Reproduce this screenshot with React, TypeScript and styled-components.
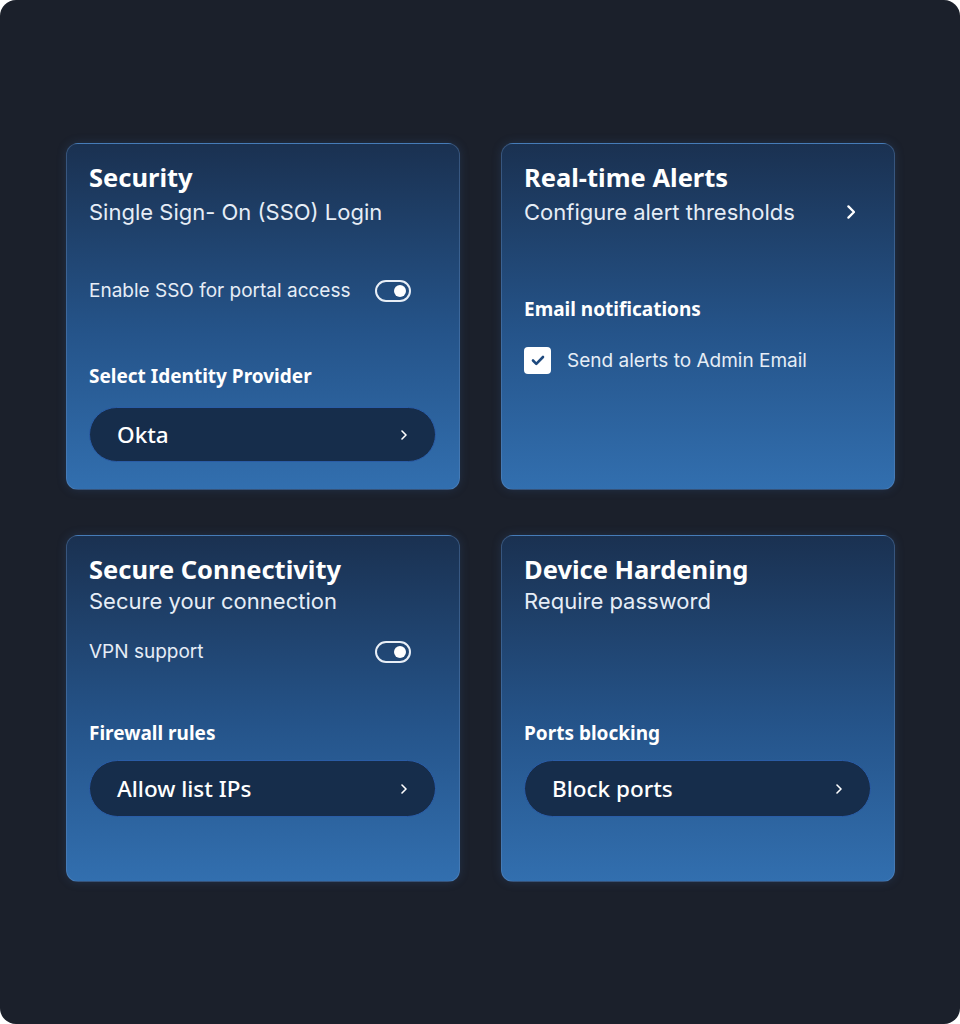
import React from "react";
import styled, { createGlobalStyle } from "styled-components";

const Global = createGlobalStyle`
  html, body { margin: 0; padding: 0; background: #ffffff; }
  body { font-family: "Inter", "Noto Sans", sans-serif; -webkit-font-smoothing: antialiased; }
  * { box-sizing: border-box; }
`;

const Page = styled.div`
  width: 960px;
  height: 1024px;
  background: #1b202b;
  border-radius: 16px;
  padding: 143px 66px 142px;
  display: grid;
  grid-template-columns: 1fr 1fr;
  grid-template-rows: 1fr 1fr;
  column-gap: 41px;
  row-gap: 45px;
`;

const Card = styled.section`
  border-radius: 12px;
  border: 1px solid rgba(110, 150, 200, 0.35);
  background: linear-gradient(180deg, #1a3151 0%, #25548a 55%, #326faf 100%);
  box-shadow: 0 0 10px rgba(60, 100, 160, 0.25);
  padding: 18px 23px 0 22px;
  display: flex;
  flex-direction: column;
  color: #ffffff;
`;

const Title = styled.h2`
  margin: 0;
  font-family: "Noto Sans", "Open Sans", sans-serif;
  font-weight: 700;
  font-size: 25.5px;
  line-height: 30px;
`;

const SubRow = styled.div<{ $gap: number }>`
  margin-top: ${(p) => p.$gap}px;
  display: flex;
  align-items: center;
  justify-content: space-between;
  padding-right: 16px;
`;

const Subtitle = styled.p`
  margin: 0;
  font-family: "Inter", sans-serif;
  font-weight: 400;
  font-size: 22px;
  line-height: 26px;
  color: #e6edf6;
`;

const ToggleRow = styled.div<{ $top: number }>`
  margin-top: ${(p) => p.$top}px;
  display: flex;
  align-items: center;
  justify-content: space-between;
  padding-right: 25px;
  height: 24px;
`;

const RowText = styled.span`
  font-family: "Inter", sans-serif;
  font-size: 19px;
  line-height: 24px;
  color: #e6edf6;
`;

const Toggle = styled.span`
  width: 36px;
  height: 22px;
  border: 2px solid #e8eef6;
  border-radius: 11px;
  display: flex;
  align-items: center;
  justify-content: flex-end;
  padding-right: 3px;
  &::after {
    content: "";
    width: 12px;
    height: 12px;
    border-radius: 50%;
    background: #ffffff;
  }
`;

const SectionLabel = styled.h3<{ $top: number }>`
  margin: ${(p) => p.$top}px 0 0;
  font-family: "Noto Sans", "Open Sans", sans-serif;
  font-weight: 700;
  font-size: 19px;
  line-height: 24px;
  color: #ffffff;
`;

const Pill = styled.button<{ $top: number; $h: number }>`
  margin-top: ${(p) => p.$top}px;
  width: 347px;
  height: ${(p) => p.$h}px;
  border-radius: 999px;
  background: #162d4b;
  border: 1px solid #2a5ca6;
  display: flex;
  align-items: center;
  justify-content: space-between;
  padding: 0 28px 0 27px;
  color: #ffffff;
  font-family: "Noto Sans", "Open Sans", sans-serif;
  font-size: 22.5px;
  font-weight: 500;
  cursor: pointer;
`;

const CheckRow = styled.div<{ $top: number }>`
  margin-top: ${(p) => p.$top}px;
  display: flex;
  align-items: center;
  gap: 16px;
`;

const CheckBox = styled.span`
  width: 27px;
  height: 27px;
  border-radius: 4px;
  background: #ffffff;
  display: flex;
  align-items: center;
  justify-content: center;
`;

const Chevron = ({ size = 10 }: { size?: number }) => (
  <svg width={size * 0.6} height={size} viewBox="0 0 6 10" fill="none">
    <path d="M1 1l4 4-4 4" stroke="#ffffff" strokeWidth="1.6" strokeLinecap="round" strokeLinejoin="round" />
  </svg>
);

export default function App() {
  return (
    <>
      <Global />
      <Page>
        <Card>
          <Title>Security</Title>
          <SubRow $gap={7}>
            <Subtitle>Single Sign- On (SSO) Login</Subtitle>
          </SubRow>
          <ToggleRow $top={54}>
            <RowText>Enable SSO for portal access</RowText>
            <Toggle />
          </ToggleRow>
          <SectionLabel $top={61}>Select Identity Provider</SectionLabel>
          <Pill $top={19} $h={55}>
            Okta
            <Chevron />
          </Pill>
        </Card>

        <Card>
          <Title>Real-time Alerts</Title>
          <SubRow $gap={7}>
            <Subtitle>Configure alert thresholds</Subtitle>
            <Chevron size={14} />
          </SubRow>
          <SectionLabel $top={72}>Email notifications</SectionLabel>
          <CheckRow $top={26}>
            <CheckBox>
              <svg width="14" height="11" viewBox="0 0 14 11" fill="none">
                <path d="M2 5.5l3.3 3.3L12 2" stroke="#1f4a7e" strokeWidth="2.6" strokeLinecap="round" strokeLinejoin="round" />
              </svg>
            </CheckBox>
            <RowText>Send alerts to Admin Email</RowText>
          </CheckRow>
        </Card>

        <Card>
          <Title>Secure Connectivity</Title>
          <SubRow $gap={4}>
            <Subtitle>Secure your connection</Subtitle>
          </SubRow>
          <ToggleRow $top={26}>
            <RowText>VPN support</RowText>
            <Toggle />
          </ToggleRow>
          <SectionLabel $top={57}>Firewall rules</SectionLabel>
          <Pill $top={15} $h={57}>
            Allow list IPs
            <Chevron />
          </Pill>
        </Card>

        <Card>
          <Title>Device Hardening</Title>
          <SubRow $gap={4}>
            <Subtitle>Require password</Subtitle>
          </SubRow>
          <SectionLabel $top={107}>Ports blocking</SectionLabel>
          <Pill $top={15} $h={57}>
            Block ports
            <Chevron />
          </Pill>
        </Card>
      </Page>
    </>
  );
}
